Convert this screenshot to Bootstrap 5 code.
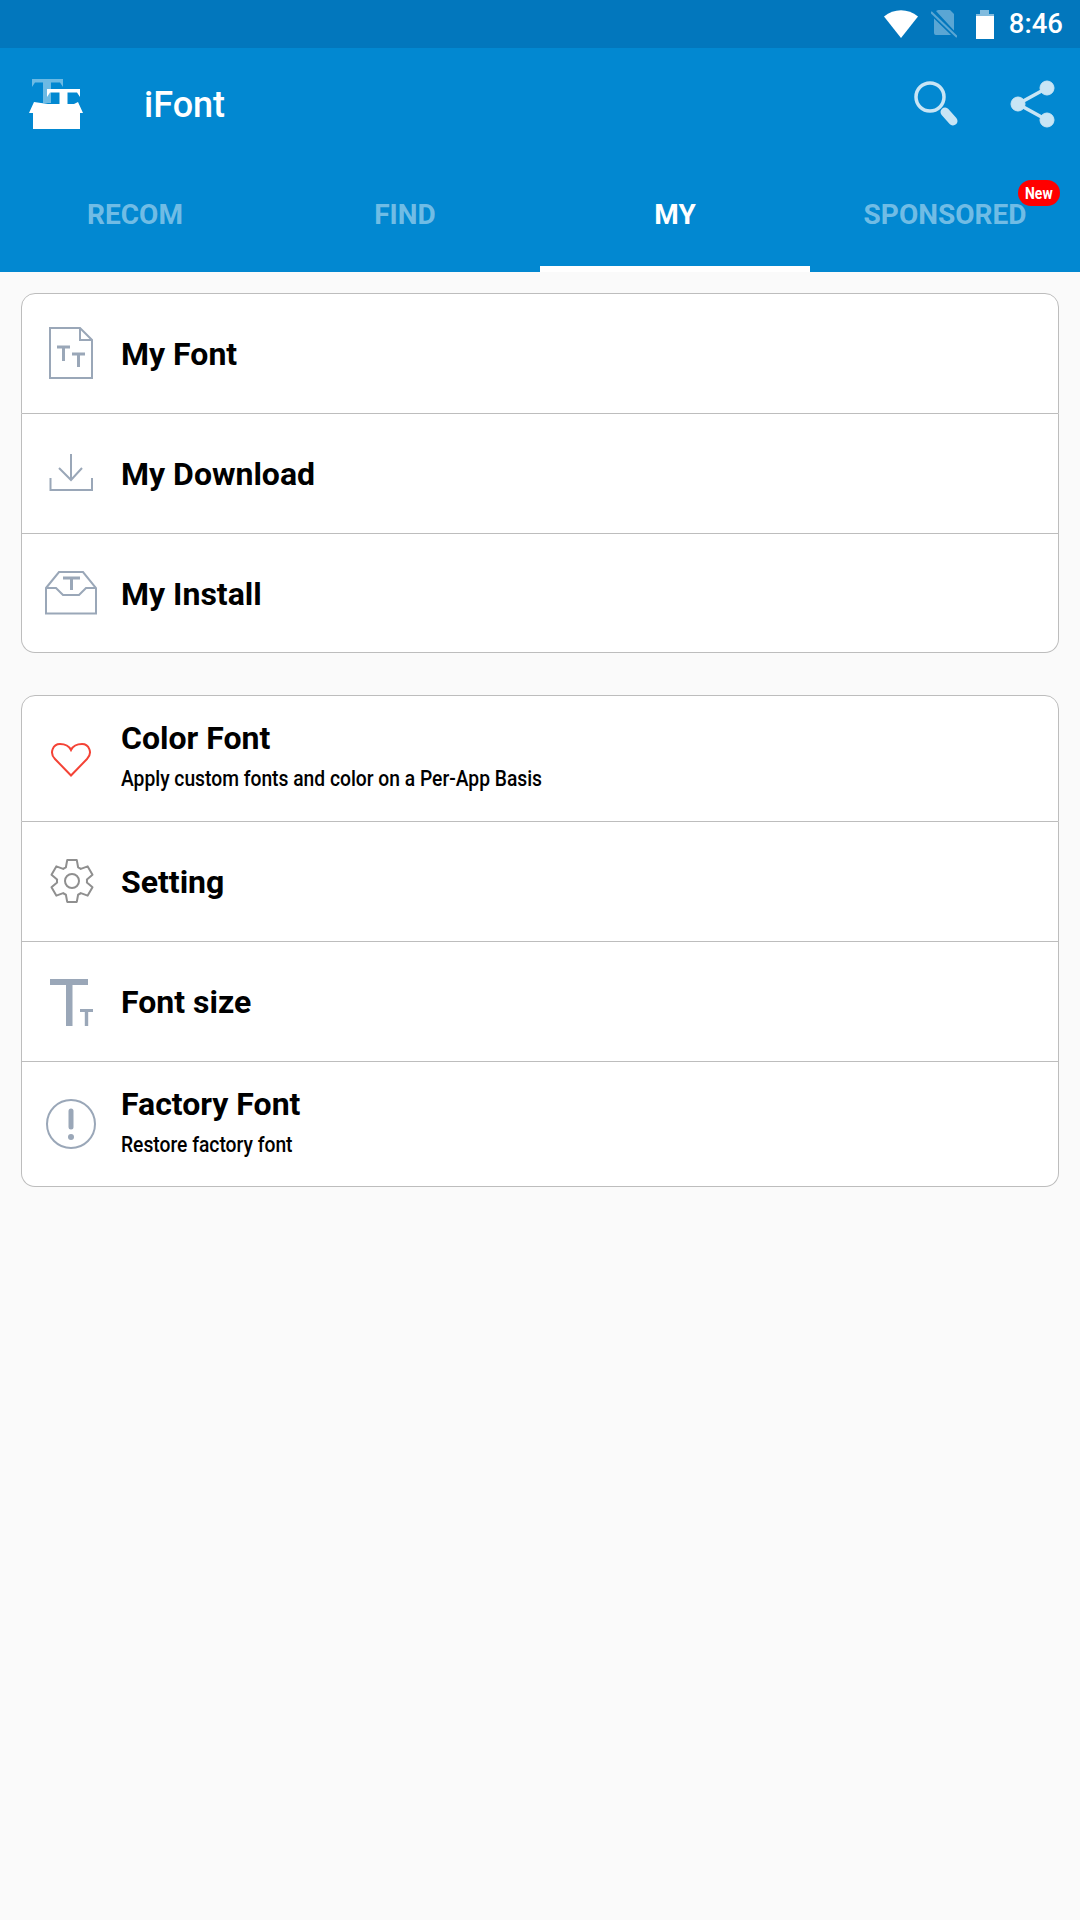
<!DOCTYPE html>
<html lang="en">

<head>
    <meta charset="UTF-8">
    <meta name="viewport" content="width=device-width, initial-scale=1.0">
    <title>iFont</title>
    <link href="https://cdn.jsdelivr.net/npm/bootstrap@5.3.2/dist/css/bootstrap.min.css" rel="stylesheet">
    <style>
        body { background: #fafafa; font-family: Roboto, sans-serif; min-height: 1920px; }
        .status-strip { height: 48px; background: #0277bd; color: #fff; padding-right: 17px; }
        .status-time { font-size: 27.500px; font-weight: 500; margin-left: 15px; line-height: 1; }
        .sim-ico { margin-left: 13px; }
        .batt-ico { margin-left: 19px; }
        .app-head { background: #0288d1; }
        .app-toolbar { height: 112px; padding: 0 24px 0 28px; }
        .app-name { font-size: 36px; font-weight: 500; color: #fff; margin-left: 58px; padding-top: 2px; }
        .share-ico { margin-left: 50px; }
        .app-tabs .nav-link { height: 112px; padding: 27px 0 0; font-size: 28px; font-weight: 700; line-height: 56px; color: rgba(255, 255, 255, .45); border-bottom: 6px solid transparent; position: relative; }
        .app-tabs .nav-link.active { color: #fff; border-bottom-color: #fff; }
        .new-pill { position: absolute; top: 20px; right: 20px; width: 42px; height: 26px; border-radius: 13px; background: #f00; color: #fff; font: 700 17px/26px Roboto, sans-serif; text-align: center; }
        .new-pill span { display: inline-block; transform: scaleX(.82); }
        .menu-wrap { padding: 21px 21px 0; }
        .menu-list { --bs-list-group-border-color: #bdbdbd; --bs-list-group-border-radius: 14px; --bs-list-group-item-padding-x: 0; --bs-list-group-item-padding-y: 0; margin-bottom: 42px; }
        .menu-row { height: 120px; }
        .menu-row.has-sub { height: 125px; padding-bottom: 6px; }
        .menu-row:first-child { height: 121px; }
        .menu-row.has-sub:first-child { height: 127px; }
        .menu-list.short .menu-row:last-child { height: 119px; }
        .menu-ico { width: 60px; height: 60px; margin: 0 19px 0 20px; flex: none; }
        .has-sub .menu-ico { margin-top: 6px; }
        .menu-title { font-size: 32px; font-weight: 700; line-height: 40px; color: #000; padding-top: 1px; }
        .menu-sub { font-size: 22px; font-weight: 500; line-height: 30px; color: #000; margin-top: 6px; transform: scaleX(.875); transform-origin: left center; white-space: nowrap; }
        .ico-line { fill: none; stroke: #9aa7b8; stroke-width: 2; }
        .ico-thick { fill: none; stroke: #9aa7b8; stroke-width: 3; }
    </style>
</head>

<body>
    <div class="status-strip d-flex align-items-center justify-content-end">
        <svg width="34" height="28" viewBox="0 0 34 28"><path d="M0 6.500C10 -2 24 -2 34 6.500L17 28Z" fill="#fff"/></svg>
        <svg class="sim-ico" width="26" height="28" viewBox="0 0 26 28" fill="#fff" opacity=".35"><path d="M7 0H19L23 4V20.500L5 1ZM3 8.400L20 25H5Q3 25 3 23Z"/><path d="M0 2L26 27" stroke="#fff" stroke-width="2"/></svg>
        <svg class="batt-ico" width="18" height="29" viewBox="0 0 18 29"><path d="M4 0H13V4H18V6H0V4H4Z" fill="#fff" opacity=".5"/><rect y="6" width="18" height="23" fill="#fff"/></svg>
        <span class="status-time">8:46</span>
    </div>

    <div class="app-head">
        <nav class="navbar app-toolbar flex-nowrap">
            <div class="d-flex align-items-center">
                <svg width="58" height="52" viewBox="0 0 58 52">
                    <path d="M4 1H35V9L32 4.500H23V25H15V4.500H7L4 9Z" fill="#fff" opacity=".42"/>
                    <path d="M19 11H52V19L49 14.500H39.500V30H31.500V14.500H22L19 19Z" fill="#fff"/>
                    <path d="M1 35L6 24L20 26H46L50 24L55 35H52V51H5V35Z" fill="#fff"/>
                </svg>
                <span class="app-name">iFont</span>
            </div>
            <div class="d-flex align-items-center">
                <svg width="46" height="46" viewBox="0 0 46 46" fill="none" stroke="#c8e5f5"><circle cx="16" cy="16" r="14" stroke-width="3.500"/><path d="M31 31L39 40" stroke-width="9" stroke-linecap="round"/></svg>
                <svg class="share-ico" width="46" height="54" viewBox="0 0 46 54" fill="#c8e5f5" stroke="#c8e5f5"><path d="M37 11L8 27L37 43" fill="none" stroke-width="3.500"/><circle cx="37" cy="11" r="7"/><circle cx="8" cy="27" r="7"/><circle cx="37" cy="43" r="7"/></svg>
            </div>
        </nav>
        <ul class="nav nav-justified app-tabs">
            <li class="nav-item"><a class="nav-link" href="#">RECOM</a></li>
            <li class="nav-item"><a class="nav-link" href="#">FIND</a></li>
            <li class="nav-item"><a class="nav-link active" href="#">MY</a></li>
            <li class="nav-item"><a class="nav-link" href="#">SPONSORED<span class="new-pill"><span>New</span></span></a></li>
        </ul>
    </div>

    <div class="menu-wrap">
        <div class="list-group menu-list short">
            <div class="list-group-item menu-row d-flex align-items-center">
                <svg class="menu-ico" viewBox="0 0 60 60"><path class="ico-line" d="M8 4H38L50 16V54H8Z M38 4V16H50"/><path class="ico-thick" d="M15 23H28M21.500 23V37M30 30H43M36.500 30V43"/></svg>
                <div class="menu-title">My Font</div>
            </div>
            <div class="list-group-item menu-row d-flex align-items-center">
                <svg class="menu-ico" viewBox="0 0 60 60"><path class="ico-line" d="M29 10V36M17 24L29 36L40 24M8.500 34V46H50V34"/></svg>
                <div class="menu-title">My Download</div>
            </div>
            <div class="list-group-item menu-row d-flex align-items-center">
                <svg class="menu-ico" viewBox="0 0 60 60"><path class="ico-line" d="M4 25L17 9H41L54 25V50.500H4ZM4 25H14L21 32H37L44 25H54"/><path class="ico-thick" d="M21 15H38M29.500 15V27"/></svg>
                <div class="menu-title">My Install</div>
            </div>
        </div>

        <div class="list-group menu-list">
            <div class="list-group-item menu-row has-sub d-flex align-items-center">
                <svg class="menu-ico" viewBox="0 0 60 60"><path d="M29 46.500L13 30C7 24 11 15 18 15C23 15 27 17 29 21C31 17 35 15 40 15C47 15 51 24 45 30Z" fill="none" stroke="#f44336" stroke-width="2"/></svg>
                <div>
                    <div class="menu-title">Color Font</div>
                    <div class="menu-sub">Apply custom fonts and color on a Per-App Basis</div>
                </div>
            </div>
            <div class="list-group-item menu-row d-flex align-items-center">
                <svg class="menu-ico" viewBox="0 0 60 60"><g transform="translate(30 29)" fill="none" stroke="#8f8f8f" stroke-width="2" stroke-linejoin="round"><path d="M-6.100 -13.700L-4.800 -20.900H4.800L6.100 -13.700A15 15 0 0 1 8.810 -12.130L15.700 -14.610L20.500 -6.290L14.910 -1.570A15 15 0 0 1 14.910 1.570L20.500 6.290L15.700 14.610L8.810 12.130A15 15 0 0 1 6.100 13.700L4.800 20.900H-4.800L-6.100 13.700A15 15 0 0 1 -8.810 12.130L-15.700 14.610L-20.500 6.290L-14.910 1.570A15 15 0 0 1 -14.910 -1.570L-20.500 -6.290L-15.700 -14.610L-8.810 -12.130A15 15 0 0 1 -6.100 -13.700Z"/><circle r="7"/></g></svg>
                <div class="menu-title">Setting</div>
            </div>
            <div class="list-group-item menu-row d-flex align-items-center">
                <svg class="menu-ico" viewBox="0 0 60 60"><path d="M8 7H46V13H30.500V54H24V13H8ZM38 37H51V40H46.200V54H42.800V40H38Z" fill="#9aa7b8"/></svg>
                <div class="menu-title">Font size</div>
            </div>
            <div class="list-group-item menu-row has-sub d-flex align-items-center">
                <svg class="menu-ico" viewBox="0 0 60 60"><circle class="ico-line" cx="29" cy="30" r="24"/><path d="M29 17V33" stroke="#9aa7b8" stroke-width="5" stroke-linecap="round"/><circle cx="29" cy="43" r="3" fill="#9aa7b8"/></svg>
                <div>
                    <div class="menu-title">Factory Font</div>
                    <div class="menu-sub">Restore factory font</div>
                </div>
            </div>
        </div>
    </div>

    <script src="https://cdn.jsdelivr.net/npm/bootstrap@5.3.2/dist/js/bootstrap.bundle.min.js"></script>
</body>

</html>
